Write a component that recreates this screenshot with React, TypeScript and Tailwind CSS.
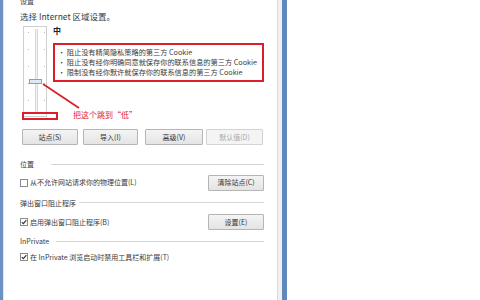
const font = "font-['Noto_Sans_CJK_SC','Liberation_Sans',sans-serif]";

function Btn({ label, disabled, className = '' }: { label: string; disabled?: boolean; className?: string }) {
  return (
    <div
      className={`h-[16px] flex items-center justify-center text-[7px] border rounded-[1px] ${
        disabled
          ? 'border-[#d3d3d3] bg-[#f4f4f4] text-[#a8a8a8]'
          : 'border-[#b5b5b5] bg-gradient-to-b from-[#f4f4f4] to-[#e4e4e4] text-[#333]'
      } ${className}`}
    >
      {label}
    </div>
  );
}

function Check({ checked, label }: { checked?: boolean; label: string }) {
  return (
    <div className="flex items-center gap-[2px] text-[7px] text-[#3a3a3a]">
      <div className="w-[8px] h-[8px] border border-[#8c8c8c] bg-white flex items-center justify-center">
        {checked && (
          <svg width="6" height="6" viewBox="0 0 6 6">
            <path d="M0.8 3.1 L2.4 4.7 L5.3 1.2" stroke="#333" strokeWidth="1.1" fill="none" />
          </svg>
        )}
      </div>
      <span>{label}</span>
    </div>
  );
}

function Section({ title, lineFrom }: { title: string; lineFrom: string }) {
  return (
    <div className="flex items-center text-[7px] text-[#3a3a3a]">
      <span className={lineFrom}>{title}</span>
      <div className="flex-1 h-px bg-[#d6d6d6]" />
    </div>
  );
}

export default function App() {
  const ticks = [33, 50, 67, 84, 101];
  return (
    <div className={`w-[480px] h-[300px] flex bg-white overflow-hidden ${font}`}>
      <div className="w-[3px] bg-[#6d91c2]" />
      <div className="w-[1px] bg-[#e6e6e6]" />
      <div className="relative w-[273px] bg-white pl-[16px] pr-[13px]">
        <div className="text-[7px] text-[#3a3a3a] leading-[10px] mt-[-4px]">设置</div>
        <div className="text-[8.5px] text-[#3a3a3a] leading-[10px] mt-[5px]">选择 Internet 区域设置。</div>

        <div className="flex mt-[5px]">
          <div className="relative ml-[3px] w-[31px] h-[91px] border border-[#cfcfcf] bg-white">
            <div className="absolute left-[11px] top-[2px] bottom-[2px] w-[3px] border-x border-[#d8d8d8] bg-[#f3f3f3]" />
            {ticks.map(t => (
              <div key={t}>
                <div className="absolute left-[4px] w-[1px] h-[1px] bg-[#bdbdbd]" style={{ top: t - 28 }} />
                <div className="absolute left-[20px] w-[1px] h-[1px] bg-[#bdbdbd]" style={{ top: t - 28 }} />
              </div>
            ))}
            <div className="absolute left-[5px] top-[52px] w-[13px] h-[5px] border border-[#7ea3cb] bg-[#dce9f6]" />
          </div>
          <div className="ml-[6px] flex-1">
            <div className="text-[8px] font-bold text-[#222] leading-[10px]">中</div>
            <div className="mt-[7px] w-[211px] h-[39px] border-[2.5px] border-[#dc1e2b] pl-[3px] pt-[2px] text-[7.2px] leading-[10px] text-[#3a3a3a] whitespace-nowrap">
              <div>· 阻止没有精简隐私策略的第三方 Cookie</div>
              <div>· 阻止没有经你明确同意就保存你的联系信息的第三方 Cookie</div>
              <div>· 限制没有经你默许就保存你的联系信息的第三方 Cookie</div>
            </div>
          </div>
        </div>

        <div className="flex mt-[12px] ml-[2px]">
          <Btn label="站点(S)" className="w-[56px]" />
          <Btn label="导入(I)" className="w-[55px] ml-[5px]" />
          <Btn label="高级(V)" className="w-[58px] ml-[7px]" />
          <Btn label="默认值(D)" disabled className="w-[57px] ml-[3px]" />
        </div>

        <div className="mt-[14px]">
          <Section title="位置" lineFrom="w-[31px]" />
        </div>
        <div className="flex items-center justify-between mt-[5px]">
          <Check label="从不允许网站请求你的物理位置(L)" />
          <Btn label="清除站点(C)" className="w-[56px]" />
        </div>

        <div className="mt-[7px]">
          <Section title="弹出窗口阻止程序" lineFrom="w-[59px]" />
        </div>
        <div className="flex items-center justify-between mt-[6px]">
          <Check checked label="启用弹出窗口阻止程序(B)" />
          <Btn label="设置(E)" className="w-[56px]" />
        </div>

        <div className="mt-[6px]">
          <Section title="InPrivate" lineFrom="w-[36px]" />
        </div>
        <div className="mt-[5px]">
          <Check checked label="在 InPrivate 浏览启动时禁用工具栏和扩展(T)" />
        </div>

        <div className="absolute left-[18px] top-[112px] w-[36px] h-[8px] border-[2px] border-[#dc1e2b]" />
        <svg className="absolute left-0 top-0" width="273" height="300" viewBox="0 0 273 300">
          <line x1="39" y1="84" x2="75" y2="108" stroke="#dc1e2b" strokeWidth="1.8" />
        </svg>
        <div className="absolute left-[69px] top-[110px] text-[8px] leading-[10px] text-[#e0262f]">把这个跳到“低”</div>
      </div>
      <div className="w-[5px] bg-[#f0f0f0] border-l border-[#d9d9d9]" />
      <div className="w-[5px] bg-[#5f88bb]" />
      <div className="flex-1 bg-white" />
    </div>
  );
}
